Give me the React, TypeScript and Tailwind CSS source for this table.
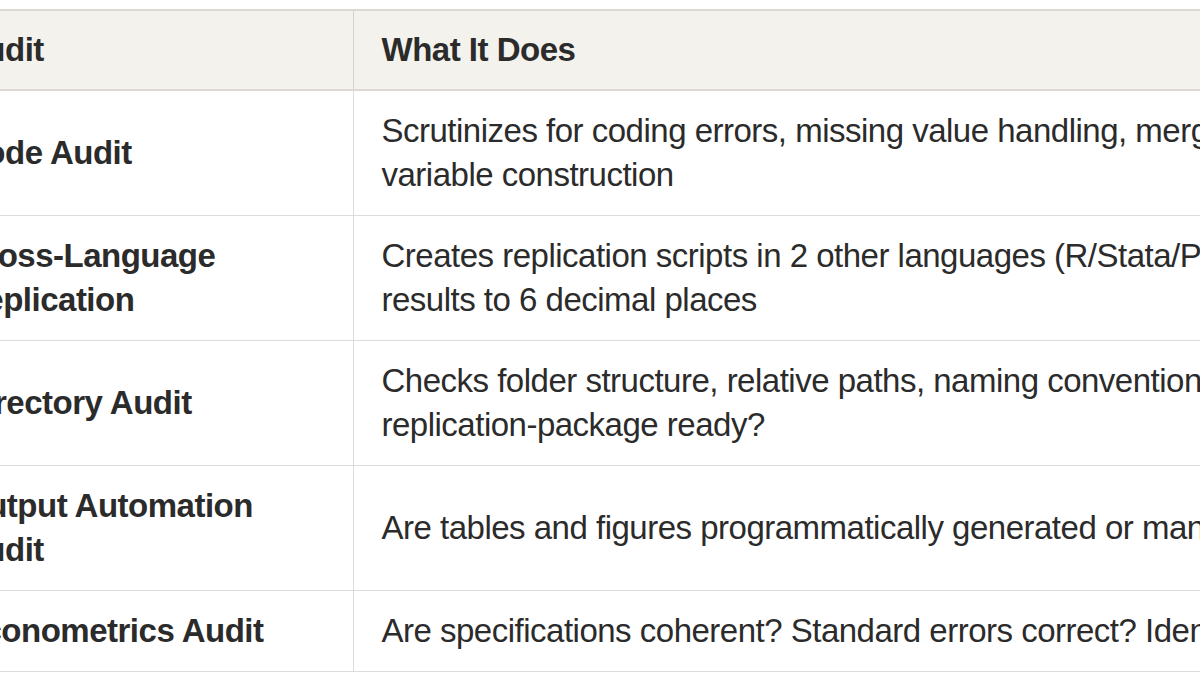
import React from "react";

const rows: { label: string[]; desc: string[] }[] = [
  { label: ["Code Audit"], desc: ["Scrutinizes for coding errors, missing value handling, merge issues, and", "variable construction"] },
  { label: ["Cross-Language", "Replication"], desc: ["Creates replication scripts in 2 other languages (R/Stata/Python) and compares", "results to 6 decimal places"] },
  { label: ["Directory Audit"], desc: ["Checks folder structure, relative paths, naming conventions. Is it", "replication-package ready?"] },
  { label: ["Output Automation", "Audit"], desc: ["Are tables and figures programmatically generated or manually copied?"] },
  { label: ["Econometrics Audit"], desc: ["Are specifications coherent? Standard errors correct? Identification credible?"] },
];

export default function App() {
  return (
    <div
      className="w-[1200px] h-[675px] overflow-hidden bg-white pt-[9px] text-[#2b2b2b]"
      style={{ fontFamily: '"Liberation Sans", Arial, sans-serif' }}
    >
      <table className="ml-[-66px] w-[1800px] min-w-[1800px] table-fixed border-collapse text-[33px] leading-[44px] tracking-[-0.5px]">
        <colgroup>
          <col className="w-[419px]" />
          <col className="w-[1381px]" />
        </colgroup>
        <thead>
          <tr className="bg-[#f4f2ec]">
            <th className="border-y-2 border-r border-y-[#dcd9d2] border-r-[#d6d3cc] pl-[28px] pr-[20px] py-[17px] text-left font-bold whitespace-nowrap">
              Audit
            </th>
            <th className="border-y-2 border-[#dcd9d2] pl-[28px] py-[17px] text-left font-bold whitespace-nowrap">
              What It Does
            </th>
          </tr>
        </thead>
        <tbody>
          {rows.map((r, i) => (
            <tr key={i}>
              <td className="border-b border-r border-[#dcdcdc] pl-[28px] pr-[20px] py-[18px] align-middle font-bold whitespace-nowrap">
                {r.label.map((l, j) => (
                  <div key={j}>{l}</div>
                ))}
              </td>
              <td className="border-b border-[#dcdcdc] pl-[28px] py-[18px] align-middle whitespace-nowrap">
                {r.desc.map((d, j) => (
                  <div key={j}>{d}</div>
                ))}
              </td>
            </tr>
          ))}
        </tbody>
      </table>
    </div>
  );
}
